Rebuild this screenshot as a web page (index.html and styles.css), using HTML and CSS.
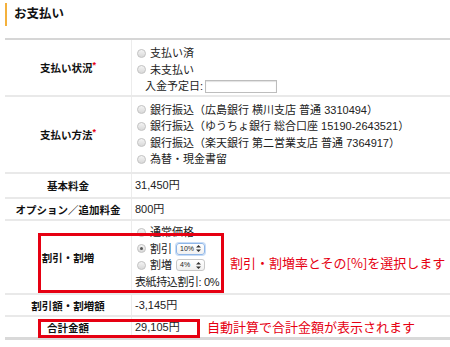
FILE: index.html
```
<!DOCTYPE html>
<html lang="ja">
<head>
    <meta charset="UTF-8">
    <title>お支払い</title>
    <link rel="stylesheet" href="styles.css">
</head>
<body>
    <div class="panel">
        <h2 class="panel-title">お支払い</h2>

        <table class="pay-table">
            <tr class="row-status">
                <th>支払い状況<span class="req">*</span></th>
                <td>
                    <div class="opt-list">
                        <div class="opt"><span class="radio"></span>支払い済</div>
                        <div class="opt"><span class="radio"></span>未支払い</div>
                        <div class="opt sub">入金予定日: <span class="date-input"></span></div>
                    </div>
                </td>
            </tr>
            <tr class="row-method">
                <th>支払い方法<span class="req">*</span></th>
                <td>
                    <div class="opt"><span class="radio"></span>銀行振込（広島銀行 横川支店 普通 3310494）</div>
                    <div class="opt"><span class="radio"></span>銀行振込（ゆうちょ銀行 総合口座 15190-2643521）</div>
                    <div class="opt"><span class="radio"></span>銀行振込（楽天銀行 第二営業支店 普通 7364917）</div>
                    <div class="opt"><span class="radio"></span>為替・現金書留</div>
                </td>
            </tr>
            <tr class="row-base">
                <th>基本料金</th>
                <td>31,450円</td>
            </tr>
            <tr class="row-small">
                <th>オプション／追加料金</th>
                <td>800円</td>
            </tr>
            <tr class="row-discount">
                <th>割引・割増</th>
                <td>
                    <div class="opt"><span class="radio"></span>通常価格</div>
                    <div class="opt"><span class="radio checked"></span>割引 <span class="mini-select focus">10%<svg width="5" height="7" viewBox="0 0 5 7"><path d="M2.5 0L5 2.6H0zM2.5 7L0 4.4h5z" fill="#333"/></svg></span></div>
                    <div class="opt"><span class="radio"></span>割増 <span class="mini-select">4%<svg width="5" height="7" viewBox="0 0 5 7"><path d="M2.5 0L5 2.6H0zM2.5 7L0 4.4h5z" fill="#333"/></svg></span></div>
                    <div class="opt cover">表紙持込割引: 0%</div>
                </td>
            </tr>
            <tr class="row-small">
                <th>割引額・割増額</th>
                <td>-3,145円</td>
            </tr>
            <tr class="row-small">
                <th>合計金額</th>
                <td>29,105円</td>
            </tr>
        </table>

        <!-- annotation overlays -->
        <div class="mark mark-discount"></div>
        <div class="mark mark-total"></div>
        <p class="note note-discount">割引・割増率とその[%]を選択します</p>
        <p class="note note-total">自動計算で合計金額が表示されます</p>
    </div>
</body>
</html>
```

FILE: styles.css
```
body {
    margin: 0;
    background-color: #ffffff;
    font-family: "Liberation Sans", "Noto Sans CJK JP", sans-serif;
    color: #222;
    font-size: 11px;
}

.panel {
    position: relative;
    width: 450px;
    height: 347px;
    padding: 3px 0 0 5px;
    box-sizing: border-box;
}

.panel-title {
    margin: 0;
    height: 23px;
    line-height: 23px;
    padding-left: 7px;
    border-left: 2px solid #f4b13c;
    font-size: 12.5px;
    font-weight: bold;
    color: #111;
}

.pay-table {
    margin-top: 12px;
    width: 445px;
    border-collapse: collapse;
    border-top: 2px solid #d6d6d6;
}

.pay-table th,
.pay-table td {
    border-bottom: 2px solid #e9e9e9;
    padding: 0;
    vertical-align: middle;
}

.pay-table th {
    width: 126px;
    border-right: 1px solid #ececec;
    text-align: center;
    font-weight: bold;
    font-size: 10.5px;
    color: #111;
}

.pay-table td {
    padding-left: 3px;
    line-height: 17px;
    font-size: 11px;
}

.pay-table tr:last-child th,
.pay-table tr:last-child td {
    border-bottom: 3px solid #d9d9d9;
}

.row-status th, .row-status td { height: 55px; }
.row-status td { vertical-align: top; }
.row-status .opt-list { padding-top: 5px; }
.row-status .opt { line-height: 16.5px; }
.row-method th, .row-method td { height: 75px; }
.row-method td .opt { line-height: 16.5px; }
.row-base th, .row-base td { height: 23px; }
.row-small th, .row-small td { height: 20px; }
.row-discount th, .row-discount td { height: 72px; }
.row-discount td .opt { line-height: 16.5px; }

.req {
    color: #e60012;
    font-size: 9px;
    vertical-align: top;
}

.opt {
    display: flex;
    align-items: center;
    white-space: nowrap;
}

.opt.sub {
    padding-left: 10px;
}

.opt.cover {
    letter-spacing: -0.4px;
}

.radio {
    display: inline-block;
    width: 7px;
    height: 7px;
    margin: 0 4px 0 2px;
    border: 1px solid #c4c4c4;
    border-radius: 50%;
    background: linear-gradient(#f4f4f4, #d8d8d8);
    box-sizing: content-box;
    position: relative;
}

.radio.checked::after {
    content: "";
    position: absolute;
    left: 2px;
    top: 2px;
    width: 3px;
    height: 3px;
    border-radius: 50%;
    background: #555;
}

.date-input {
    display: inline-block;
    width: 70px;
    height: 11px;
    margin-left: 2px;
    border: 1px solid #bdbdbd;
    box-shadow: inset 0 1px 1px #e2e2e2;
}

.mini-select {
    display: inline-flex;
    align-items: center;
    justify-content: space-between;
    width: 21px;
    height: 10px;
    margin-left: 4px;
    padding: 0 3px;
    border: 1px solid #c8c8c8;
    border-radius: 3px;
    font-size: 7px;
    line-height: 10px;
    background: linear-gradient(#ffffff, #f0f0f0);
}

.mini-select.focus {
    border-color: #8fb6e8;
    box-shadow: 0 0 0 1px #c7dcf6;
}

.mark {
    position: absolute;
    border: 3px solid #e60012;
}

.mark-discount {
    left: 38px;
    top: 233px;
    width: 180px;
    height: 54px;
}

.mark-total {
    left: 38px;
    top: 319px;
    width: 156px;
    height: 13px;
}

.note {
    position: absolute;
    margin: 0;
    color: #e60012;
    font-family: "Noto Sans CJK JP", sans-serif;
    font-size: 13px;
    line-height: 16px;
    white-space: nowrap;
}

.note-discount {
    left: 230px;
    top: 255px;
}

.note-total {
    left: 207px;
    top: 319px;
}
```
